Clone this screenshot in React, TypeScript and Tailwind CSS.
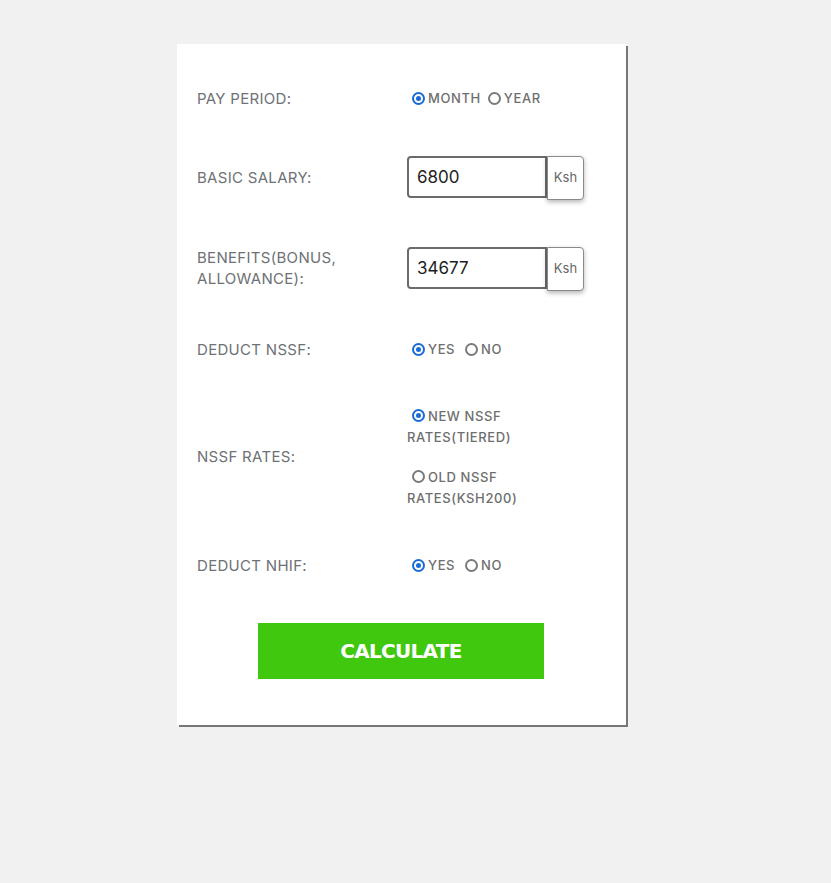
import React from 'react';

function Radio({ checked, label }: { checked?: boolean; label: React.ReactNode }) {
  return (
    <span className="inline">
      <span
        className={`inline-flex items-center justify-center align-middle -mt-[3px] ml-[5px] mr-[3px] w-[13px] h-[13px] rounded-full border-2 ${
          checked ? 'border-[#1a6bd6]' : 'border-[#7a7a7a]'
        }`}
      >
        {checked && <span className="w-[5px] h-[5px] rounded-full bg-[#1a6bd6]" />}
      </span>
      {label}
    </span>
  );
}

function MoneyInput({ value }: { value: string }) {
  return (
    <div className="flex items-start mt-[2px]">
      <div className="w-[140px] h-[42px] border-2 border-[#6b6b6b] rounded-l-[4px] flex items-center pl-[8px] pt-[2px] text-[17px] text-[#1e1e1e]">
        {value}
      </div>
      <div className="w-[37px] h-[44px] border border-[#8a8a8a] rounded-r-[4px] flex items-center justify-center text-[13px] text-[#666] shadow-[0_2px_5px_rgba(0,0,0,0.3)] bg-white">
        Ksh
      </div>
    </div>
  );
}

export default function App() {
  const label = 'text-[15px] text-[#6e7175] tracking-[0.3px] leading-[21px]';
  const opt = 'text-[13px] font-medium text-[#6e6e6e] tracking-[0.6px] pt-[2px]';

  return (
    <div className="min-h-[883px] bg-[#f1f1f1] font-['Inter',sans-serif] pt-[44px]">
      <div className="ml-[177px] w-[449px] bg-white shadow-[2px_2px_0_#777] px-[20px] pt-[30px] pb-[46px]">
        <div className="h-[48px] flex items-center">
          <div className={`w-[210px] ${label}`}>PAY PERIOD:</div>
          <div className={opt}>
            <Radio checked label="MONTH" />
            <span className="ml-[2px]" />
            <Radio label="YEAR" />
          </div>
        </div>

        <div className="h-[110px] flex items-center">
          <div className={`w-[210px] ${label}`}>BASIC SALARY:</div>
          <MoneyInput value="6800" />
        </div>

        <div className="h-[72px] flex items-center">
          <div className={`w-[210px] ${label}`}>
            BENEFITS(BONUS,
            <br />
            ALLOWANCE):
          </div>
          <MoneyInput value="34677" />
        </div>

        <div className="h-[90px] flex items-center">
          <div className={`w-[210px] ${label}`}>DEDUCT NSSF:</div>
          <div className={opt}>
            <Radio checked label="YES" />
            <span className="ml-[5px]" />
            <Radio label="NO" />
          </div>
        </div>

        <div className="h-[124px] flex items-center">
          <div className={`w-[210px] ${label}`}>NSSF RATES:</div>
          <div className={`w-[140px] flex flex-col gap-[19px] ${opt} leading-[21px]`}>
            <div>
              <Radio checked label="NEW NSSF RATES(TIERED)" />
            </div>
            <div>
              <Radio label="OLD NSSF RATES(KSH200)" />
            </div>
          </div>
        </div>

        <div className="h-[94px] flex items-center">
          <div className={`w-[210px] ${label}`}>DEDUCT NHIF:</div>
          <div className={opt}>
            <Radio checked label="YES" />
            <span className="ml-[5px]" />
            <Radio label="NO" />
          </div>
        </div>

        <div className="mt-[11px] flex">
          <button className="ml-[61px] w-[286px] h-[56px] bg-[#40c80f] text-white text-[20px] font-bold font-['DejaVu_Sans',sans-serif] tracking-[-0.7px]">
            CALCULATE
          </button>
        </div>
      </div>
    </div>
  );
}
